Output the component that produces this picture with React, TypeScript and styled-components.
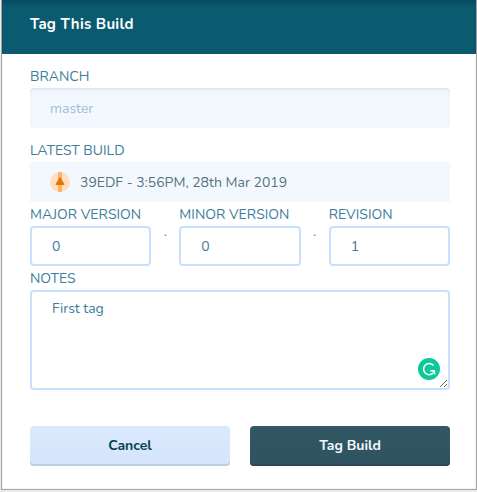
import React from "react";
import styled, { createGlobalStyle, css } from "styled-components";

const GlobalStyle = createGlobalStyle`
  *, *::before, *::after { box-sizing: border-box; }
  body {
    margin: 0;
    background: #ececec;
    font-family: Nunito, Lato, "Open Sans", sans-serif;
    font-size: 14px;
    color: #3d7d99;
  }
`;

const Page = styled.div`
  height: 492px;
  padding: 0 0 2px 1px;
  overflow: hidden;
`;

const Dialog = styled.section`
  height: 490px;
  border: 1px solid #a3a3a3;
  border-top: 0;
  background: #fff;
  box-shadow: inset 0 0 2px rgba(0, 0, 0, 0.16);
`;

const Header = styled.header`
  height: 54px;
  padding: 0 28px 6px;
  display: flex;
  align-items: center;
  background: #0a5a70;
  box-shadow: inset 0 5px 4px -2px rgba(0, 40, 50, 0.35);
`;

const Title = styled.h1`
  margin: 0;
  color: #fff;
  font-size: 15px;
  font-weight: 700;
  letter-spacing: 0.25px;
`;

const Form = styled.form`
  padding: 10px 26px 0 28px;
`;

const Field = styled.div<{ $gap?: number }>`
  display: flex;
  flex-direction: column;
  min-width: 0;
  margin-bottom: ${(p) => p.$gap ?? 0}px;
`;

const Label = styled.label`
  height: 24px;
  line-height: 25px;
  white-space: nowrap;
`;

const control = css`
  width: 100%;
  margin: 0;
  border: 2px solid #c5e1ff;
  border-radius: 4px;
  background: #fff;
  color: #3d7d99;
  font: inherit;
  outline: none;
`;

const Input = styled.input`
  ${control}
  height: 40px;
  padding: 0 20px;

  &:disabled {
    border: 0;
    background: #f3f8ff;
    color: #9fbdd9;
    box-shadow: inset 0 2px 2px #dce7ef;
  }
`;

const BuildRow = styled.div`
  height: 40px;
  padding: 0 20px;
  display: flex;
  align-items: center;
  gap: 10px;
  background: #f3f8ff;
  color: #56727f;
`;

const Versions = styled.div`
  display: grid;
  grid-template-columns: 1fr 28px 1fr 28px 1fr;
`;

const Dot = styled.span`
  height: 64px;
  padding-top: 21px;
  text-align: center;
  line-height: 17px;
`;

const NotesBox = styled.div`
  position: relative;
  height: 100px;
`;

const Notes = styled.textarea`
  ${control}
  display: block;
  height: 100px;
  padding: 8px 20px;
  line-height: 17px;
  resize: both;
`;

const AssistantBadge = styled.svg`
  position: absolute;
  right: 10px;
  bottom: 10px;
`;

const Actions = styled.div`
  margin-top: 36px;
  display: grid;
  grid-template-columns: 1fr 1fr;
  gap: 20px;
`;

const Button = styled.button<{ $primary?: boolean }>`
  height: 40px;
  padding: 0 0 2px;
  border: 0;
  border-radius: 4px;
  font: inherit;
  font-weight: 700;
  color: ${(p) => (p.$primary ? "#f3f8ff" : "#064252")};
  background: ${(p) =>
    p.$primary
      ? "linear-gradient(#325864, #2f5360)"
      : "linear-gradient(#dce9fd, #d5e4fc)"};
  box-shadow: inset 0 -2px 0 ${(p) => (p.$primary ? "#294853" : "#bdcde6")};
`;

const CommitIcon = () => (
  <svg width="20" height="20" viewBox="0 0 20 20" aria-hidden="true">
    <circle cx="10" cy="10" r="10" fill="#ffdfc0" />
    <path d="M8 0h4v20H8z" fill="#ffb366" />
    <path d="M10 4.500L14.300 12Q14.700 13 13.700 13H6.300Q5.300 13 5.700 12Z" fill="#df7606" />
  </svg>
);

const VersionField = ({ label, value }: { label: string; value: string }) => (
  <Field>
    <Label>{label}</Label>
    <Input aria-label={label} defaultValue={value} />
  </Field>
);

export default function App() {
  return (
    <>
      <GlobalStyle />
      <Page>
        <Dialog>
          <Header>
            <Title>Tag This Build</Title>
          </Header>
          <Form>
            <Field $gap={10}>
              <Label>BRANCH</Label>
              <Input disabled defaultValue="master" />
            </Field>
            <Field>
              <Label>LATEST BUILD</Label>
              <BuildRow>
                <CommitIcon />
                <span>39EDF - 3:56PM, 28th Mar 2019</span>
              </BuildRow>
            </Field>
            <Versions>
              <VersionField label="MAJOR VERSION" value="0" />
              <Dot>.</Dot>
              <VersionField label="MINOR VERSION" value="0" />
              <Dot>.</Dot>
              <VersionField label="REVISION" value="1" />
            </Versions>
            <Field>
              <Label>NOTES</Label>
              <NotesBox>
                <Notes defaultValue="First tag" spellCheck={false} />
                <AssistantBadge width="22" height="22" viewBox="0 0 22 22" aria-hidden="true">
                  <circle cx="11" cy="11" r="11" fill="#0bca97" />
                  <path
                    d="M15.500 7.500A5.600 5.600 0 1 0 15 15.200M12.300 12.800H16.500"
                    fill="none"
                    stroke="#fff"
                    strokeWidth="1.600"
                  />
                  <path d="M13.300 12H17.200V17.200Z" fill="#fff" />
                </AssistantBadge>
              </NotesBox>
            </Field>
            <Actions>
              <Button type="button">Cancel</Button>
              <Button type="button" $primary>
                Tag Build
              </Button>
            </Actions>
          </Form>
        </Dialog>
      </Page>
    </>
  );
}
